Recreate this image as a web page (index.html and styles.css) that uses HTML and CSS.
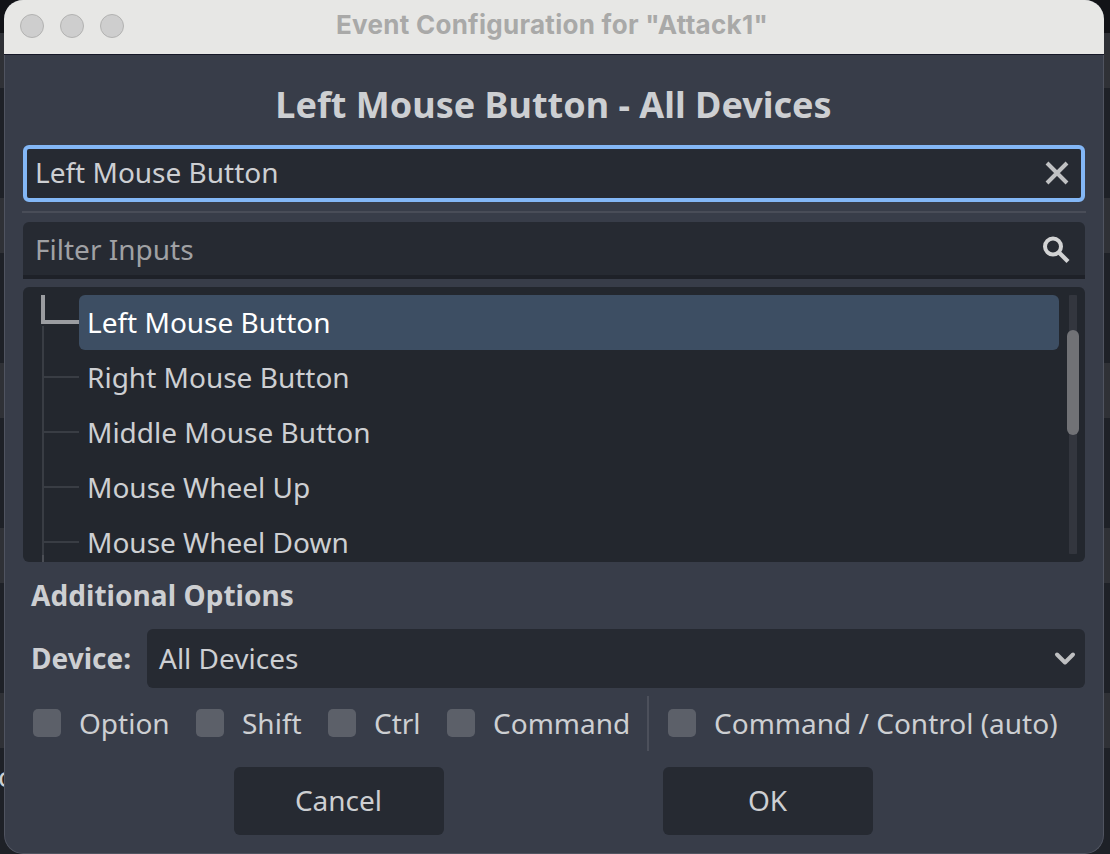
FILE: index.html
```html
<!DOCTYPE html>
<html lang="en">
<head>
<meta charset="utf-8">
<title>Event Configuration</title>
<link rel="stylesheet" href="styles.css">
</head>
<body>
<div class="desktop">
  <span class="backdrop-text">c</span>
  <section class="window">
    <header class="titlebar">
      <div class="lights"><i></i><i></i><i></i></div>
      <h1><span>Event Configuration for "Attack1"</span></h1>
    </header>
    <main class="content">
      <h2><span>Left Mouse Button - All Devices</span></h2>
      <div class="field focused">
        <span class="t">Left Mouse Button</span>
        <svg class="icon" width="32" height="32" viewBox="0 0 32 32"><path d="M6 7l20 20M26 7l-20 20" fill="none" stroke="#c0c1c3" stroke-width="4"/></svg>
      </div>
      <div class="rule"></div>
      <div class="field filter">
        <span class="t hint">Filter Inputs</span>
        <svg class="icon" width="32" height="32" viewBox="0 0 32 32"><circle cx="12" cy="13.500" r="8" fill="none" stroke="#d2d3d4" stroke-width="4"/><path d="M18 19.500l9 9" fill="none" stroke="#d2d3d4" stroke-width="4.200"/></svg>
      </div>
      <div class="tree">
        <div class="rows">
          <div class="row selected"><i class="branch"></i><span class="label"><span class="t">Left Mouse Button</span></span></div>
          <div class="row"><i class="branch"></i><span class="label"><span class="t">Right Mouse Button</span></span></div>
          <div class="row"><i class="branch"></i><span class="label"><span class="t">Middle Mouse Button</span></span></div>
          <div class="row"><i class="branch"></i><span class="label"><span class="t">Mouse Wheel Up</span></span></div>
          <div class="row last"><i class="branch"></i><span class="label"><span class="t">Mouse Wheel Down</span></span></div>
        </div>
        <div class="scroll"><div class="thumb"></div></div>
      </div>
      <h3><span>Additional Options</span></h3>
      <div class="device">
        <b>Device:</b>
        <div class="select"><span class="t">All Devices</span>
          <svg class="chevron" width="24" height="24" viewBox="0 0 24 24"><path d="M4 8.500l8 8 8-8" fill="none" stroke="#bebfc1" stroke-width="4" stroke-linecap="round" stroke-linejoin="round"/></svg>
        </div>
      </div>
      <div class="checks">
        <label><i></i><span>Option</span></label>
        <label><i></i><span>Shift</span></label>
        <label><i></i><span>Ctrl</span></label>
        <label><i></i><span>Command</span></label>
        <div class="vrule"></div>
        <label><i></i><span>Command / Control (auto)</span></label>
      </div>
      <footer class="actions">
        <button><span>Cancel</span></button>
        <button><span>OK</span></button>
      </footer>
    </main>
  </section>
</div>
</body>
</html>
```
FILE: styles.css
```css
*, *::before, *::after { box-sizing: border-box; }
body { margin: 0; font: 28px/38px "Noto Sans", sans-serif; color: #cdcfd2; overflow: hidden; }
h1, h2, h3 { margin: 0; font-weight: 700; white-space: nowrap; }
.desktop {
  position: relative; width: 1110px; height: 854px; padding: 0 6px 0 4px; overflow: hidden;
  background: linear-gradient(#121317 33px, transparent 33px), repeating-linear-gradient(#2f3136 0 55px, #1e2127 55px 165px) 0 33px;
}
.backdrop-text { position: absolute; left: -2px; top: 757px; }
.window {
  position: relative; height: 854px; display: flex; flex-direction: column;
  border-radius: 19px; overflow: hidden; background: #383d49;
}
.window::after {
  content: ""; position: absolute; inset: 55px 0 0; pointer-events: none;
  border: 1px solid #505460; border-top: 0; border-radius: 0 0 19px 19px;
}
.titlebar {
  position: relative; flex: none; height: 55px; padding-left: 16px; display: flex; align-items: center;
  background: #e7e7e5; border-bottom: 1px solid #161827;
}
.lights { display: flex; gap: 16px; margin-top: -3px; }
.lights i { width: 24px; height: 24px; border-radius: 50%; background: #cecece; border: 1px solid #b2b2b1; }
h1 { position: absolute; inset: 6px 4px auto 0; text-align: center; font-family: Inter, sans-serif; font-size: 26px; line-height: 38px; letter-spacing: 0.28px; color: #a9a9a8; }
.content { display: flex; flex-direction: column; padding: 25px 19px 0; }
h2 { height: 50px; line-height: 50px; font-size: 36px; text-align: center; text-indent: -1px; }
.field {
  height: 57px; margin-top: 15px; padding: 0 12px; display: flex; align-items: center; justify-content: space-between;
  background: #262a32; border-radius: 6px;
}
.focused { border: 4px solid #83b7f6; padding: 0 8px 3px; }
.rule { height: 2px; margin: 9px -1px; background: #494d58; }
.filter { margin-top: 0; border-bottom: 4px solid #1e2128; border-radius: 6px 6px 0 0; }
.hint { color: #a0a1a4; }
.tree {
  height: 275px; margin-top: 8px; padding: 8px 6px 0 18px; display: flex; gap: 8px; overflow: hidden;
  background: #23272e; border-radius: 6px;
}
.rows { flex: 1; }
.row { height: 55px; display: flex; align-items: stretch; }
.branch { width: 38px; display: grid; grid-template-rows: 26px 1fr; padding-left: 1px; }
.branch::before, .branch::after { content: ""; border-left: 2px solid #393d44; }
.branch::before { border-bottom: 2px solid #393d44; height: 28px; }
.branch::after { margin-top: 2px; }
.selected .branch { padding-left: 0; }
.selected .branch::before { border-left: 4px solid #9b9da1; border-bottom: 4px solid #9b9da1; height: 29px; }
.selected .branch::after { margin: 5px 0 0 1px; }
.last .branch::after { width: 2px; border: 0; background: linear-gradient(#393d44 12px, #4b4e55 12px); }
.label { flex: 1; padding: 0 8px 2px; display: flex; align-items: center; border-radius: 6px; }
.selected .label { background: #3d4e63; color: #fff; }
.scroll { width: 12px; height: 259px; padding-top: 35px; background: linear-gradient(#33363e, #33363e) center / 8px 100% no-repeat; border-radius: 4px; }
.thumb { height: 105px; border-radius: 6px; background: #717276; }
h3 { margin: 14px 8px 0; height: 39px; font-size: 28px; line-height: 39px; letter-spacing: 0.06px; }
.device { display: flex; align-items: center; margin-top: 14px; padding-left: 8px; }
.device b { width: 116px; padding-bottom: 2px; }
.select {
  flex: 1; height: 59px; padding: 0 8px 2px 12px; display: flex; align-items: center; justify-content: space-between;
  background: #262a32; border-radius: 6px;
}
.checks { height: 55px; margin: 8px 0 0 10px; display: grid; grid-template-columns: 163px 132px 119px 200px 21px 1fr; }
.checks label { display: flex; align-items: center; gap: 18px; white-space: nowrap; padding-bottom: 2px; }
.checks i { width: 28px; height: 28px; border-radius: 5px; background: #5c6069; margin-top: 1px; }
.vrule { width: 2px; background: #4c505b; }
.actions { display: flex; gap: 219px; margin: 16px 0 0 211px; }
button { width: 210px; height: 68px; padding: 0 1px 2px 0; border: 0; border-radius: 6px; background: #262a32; color: inherit; font: inherit; }
```
